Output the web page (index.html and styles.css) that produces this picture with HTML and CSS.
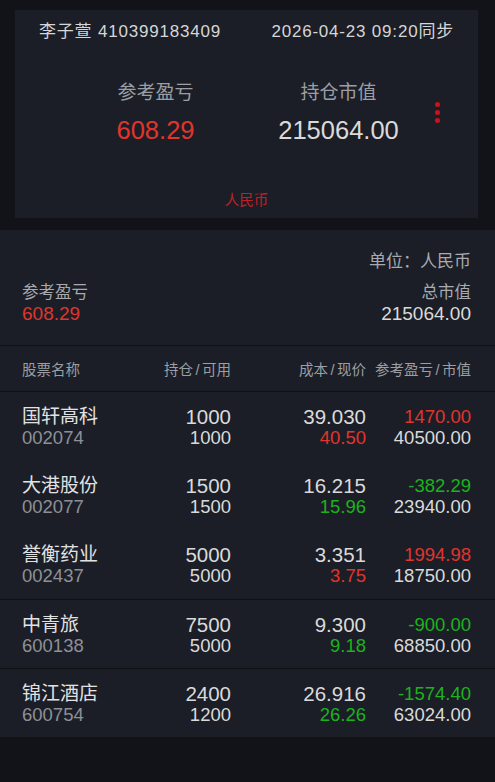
FILE: index.html
```html
<!DOCTYPE html>
<html lang="zh-CN">
<head>
    <meta charset="UTF-8">
    <meta name="viewport" content="width=device-width, initial-scale=1.0">
    <title>持仓</title>
    <link rel="stylesheet" href="styles.css">
</head>
<body>
    <div class="top-wrap">
        <div class="account-card">
            <div class="account-line">
                <span>李子萱 410399183409</span>
                <span>2026-04-23 09:20同步</span>
            </div>
            <div class="stats">
                <div class="stat">
                    <div class="stat-label">参考盈亏</div>
                    <div class="stat-value red">608.29</div>
                </div>
                <div class="stat">
                    <div class="stat-label">持仓市值</div>
                    <div class="stat-value">215064.00</div>
                </div>
                <div class="more">
                    <span class="dot"></span>
                    <span class="dot"></span>
                    <span class="dot"></span>
                </div>
            </div>
            <div class="currency">人民币</div>
        </div>
    </div>

    <div class="panel">
        <div class="summary">
            <div class="unit">单位：人民币</div>
            <div class="summary-row">
                <div>
                    <div class="sum-label">参考盈亏</div>
                    <div class="sum-value red">608.29</div>
                </div>
                <div class="right">
                    <div class="sum-label">总市值</div>
                    <div class="sum-value">215064.00</div>
                </div>
            </div>
        </div>

        <div class="table-head grid">
            <div>股票名称</div>
            <div class="right">持仓<span class="slash">/</span>可用</div>
            <div class="right">成本<span class="slash">/</span>现价</div>
            <div class="right">参考盈亏<span class="slash">/</span>市值</div>
        </div>

        <div class="row grid">
            <div><div class="name">国轩高科</div><div class="code">002074</div></div>
            <div class="right"><div class="big">1000</div><div class="small">1000</div></div>
            <div class="right"><div class="big">39.030</div><div class="small red">40.50</div></div>
            <div class="right"><div class="small red">1470.00</div><div class="small">40500.00</div></div>
        </div>
        <div class="row grid">
            <div><div class="name">大港股份</div><div class="code">002077</div></div>
            <div class="right"><div class="big">1500</div><div class="small">1500</div></div>
            <div class="right"><div class="big">16.215</div><div class="small green">15.96</div></div>
            <div class="right"><div class="small green">-382.29</div><div class="small">23940.00</div></div>
        </div>
        <div class="row grid">
            <div><div class="name">誉衡药业</div><div class="code">002437</div></div>
            <div class="right"><div class="big">5000</div><div class="small">5000</div></div>
            <div class="right"><div class="big">3.351</div><div class="small red">3.75</div></div>
            <div class="right"><div class="small red">1994.98</div><div class="small">18750.00</div></div>
        </div>
        <div class="row grid sep">
            <div><div class="name">中青旅</div><div class="code">600138</div></div>
            <div class="right"><div class="big">7500</div><div class="small">5000</div></div>
            <div class="right"><div class="big">9.300</div><div class="small green">9.18</div></div>
            <div class="right"><div class="small green">-900.00</div><div class="small">68850.00</div></div>
        </div>
        <div class="row grid sep">
            <div><div class="name">锦江酒店</div><div class="code">600754</div></div>
            <div class="right"><div class="big">2400</div><div class="small">1200</div></div>
            <div class="right"><div class="big">26.916</div><div class="small green">26.26</div></div>
            <div class="right"><div class="small green">-1574.40</div><div class="small">63024.00</div></div>
        </div>
    </div>
</body>
</html>
```

FILE: styles.css
```css
body {
    margin: 0;
    background-color: #111318;
    color: #dadada;
    font-family: "Liberation Sans", "Noto Sans CJK SC", sans-serif;
}
.red {
    color: #e0352b;
}
.green {
    color: #1db21d;
}
.right {
    text-align: right;
}

/* account card */
.top-wrap {
    padding: 10px 17px 12px 15px;
}
.account-card {
    background-color: #1b1e27;
    height: 208px;
    box-sizing: border-box;
    padding-top: 12px;
}
.account-line {
    display: flex;
    justify-content: space-between;
    padding: 0 24px;
    font-size: 17px;
    line-height: 20px;
    letter-spacing: 0.8px;
    color: #d6d6d6;
}
.stats {
    display: flex;
    align-items: center;
    margin-top: 38px;
    padding-left: 49px;
}
.stat {
    width: 183px;
    text-align: center;
}
.stat-label {
    font-size: 19px;
    line-height: 26px;
    color: #9c9ea3;
}
.stat-value {
    margin-top: 7px;
    font-size: 25.5px;
    line-height: 34px;
}
.more {
    display: flex;
    flex-direction: column;
    gap: 3px;
    margin-left: 5px;
    margin-top: -2px;
}
.dot {
    width: 5px;
    height: 5px;
    border-radius: 50%;
    background-color: #c8141c;
}
.currency {
    margin-top: 44px;
    text-align: center;
    font-size: 14.5px;
    line-height: 18px;
    color: #c41e24;
}

/* holdings panel */
.panel {
    background-color: #1b1e27;
}
.summary {
    padding: 22px 24px 20px 22px;
    border-bottom: 1px solid #0e1014;
}
.unit {
    text-align: right;
    font-size: 17px;
    line-height: 20px;
    color: #a8aaaf;
}
.summary-row {
    display: flex;
    justify-content: space-between;
    margin-top: 9px;
}
.sum-label {
    font-size: 16.5px;
    line-height: 22px;
    color: #a8aaaf;
}
.sum-value {
    font-size: 19px;
    line-height: 22px;
}

.grid {
    display: grid;
    grid-template-columns: 1fr 80px 135px 105px;
    padding: 0 24px 0 22px;
}
.table-head {
    height: 45px;
    align-items: center;
    font-size: 14.5px;
    color: #9c9ea3;
    border-bottom: 1px solid #0e1014;
}
.slash {
    margin: 0 2.5px;
}
.row {
    height: 69px;
    box-sizing: border-box;
    padding-top: 14px;
}
.row.sep {
    border-top: 1px solid #0e1014;
}
.row div div {
    line-height: 21px;
}
.name {
    font-size: 19px;
    color: #e2e2e2;
}
.code {
    font-size: 18.5px;
    color: #8e9096;
}
.big {
    font-size: 20.5px;
}
.small {
    font-size: 18.5px;
}
```
